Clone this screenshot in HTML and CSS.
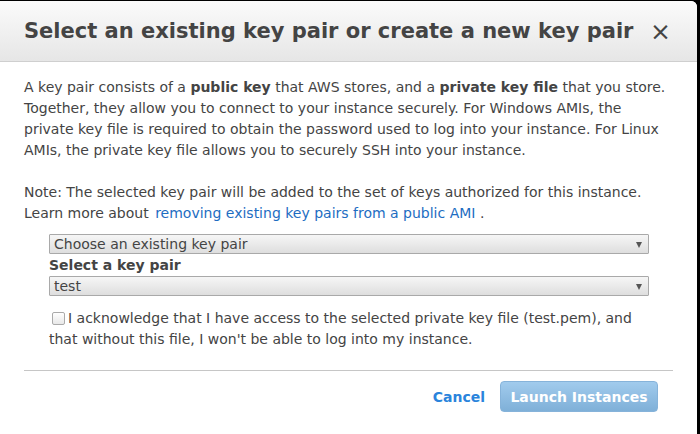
FILE: index.html
```html
<!DOCTYPE html>
<html>
<head>
<meta charset="utf-8">
<link rel="stylesheet" href="styles.css">
</head>
<body>
<div class="dialog">
  <div class="header">
    <h1 class="title">Select an existing key pair or create a new key pair</h1>
    <span class="close">&#xD7;</span>
  </div>
  <div class="body">
    <p class="para">A key pair consists of a <b>public key</b> that AWS stores, and a <b>private key file</b> that you store. Together, they allow you to connect to your instance securely. For Windows AMIs, the private key file is required to obtain the password used to log into your instance. For Linux AMIs, the private key file allows you to securely SSH into your instance.</p>
    <p class="para note">Note: The selected key pair will be added to the set of keys authorized for this instance. Learn more about <a class="link" href="#">removing existing key pairs from a public AMI</a> .</p>
    <div class="fields">
      <div class="select"><span>Choose an existing key pair</span><span class="arrow"></span></div>
      <div class="label">Select a key pair</div>
      <div class="select"><span>test</span><span class="arrow"></span></div>
      <p class="ack"><span class="check"></span>I acknowledge that I have access to the selected private key file (test.pem), and that without this file, I won't be able to log into my instance.</p>
    </div>
  </div>
  <div class="footer">
    <a class="cancel" href="#">Cancel</a>
    <button class="launch">Launch Instances</button>
  </div>
</div>
</body>
</html>
```
FILE: styles.css
```css
html, body {
  margin: 0;
  padding: 0;
  background: #000;
  height: 434px;
  overflow: hidden;
}
.dialog {
  margin-top: 1px;
  width: 697px;
  height: 433px;
  background: #fff;
  border-top-right-radius: 6px;
  font-family: "DejaVu Sans", sans-serif;
  color: #444;
}
.header {
  height: 60px;
  border-bottom: 1px solid #cfcfcf;
  border-top-right-radius: 6px;
  background: linear-gradient(#fbfbfb, #e6e6e6);
  display: flex;
  align-items: center;
  justify-content: space-between;
  padding: 0 26px 0 24px;
}
.title {
  margin: 0;
  font-size: 21px;
  font-weight: bold;
  color: #444;
}
.close {
  font-size: 25px;
  line-height: 25px;
  color: #444;
  margin-top: 1px;
}
.body {
  padding: 15px 24px 0 24px;
  font-size: 14px;
  line-height: 21px;
}
.para {
  margin: 0 0 21px 0;
}
.para.note {
  margin-bottom: 10px;
}
.link {
  color: #1d6dc2;
  text-decoration: none;
  margin-left: 2px;
}
.fields {
  margin: 0 0 0 25px;
  width: 600px;
}
.select {
  height: 18px;
  border: 1px solid #a9a9a9;
  border-radius: 1px;
  background: linear-gradient(#f6f6f6, #dedede);
  display: flex;
  align-items: center;
  justify-content: space-between;
  padding: 0 6px 0 4px;
  font-size: 14px;
  line-height: 18px;
  color: #444;
}
.arrow {
  width: 0;
  height: 0;
  border-left: 3px solid transparent;
  border-right: 3px solid transparent;
  border-top: 6px solid #555;
  margin-top: 1px;
}
.label {
  font-weight: bold;
  line-height: 22px;
}
.ack {
  margin: 12px 0 0 0;
  text-indent: 19px;
  position: relative;
}
.check {
  position: absolute;
  left: 3px;
  top: 4px;
  width: 11px;
  height: 11px;
  border: 1px solid #aaa;
  border-radius: 2px;
  background: linear-gradient(#fff, #e8e8e8);
}
.footer {
  margin: 20px 24px 0 24px;
  border-top: 1px solid #c6c6c6;
  display: flex;
  justify-content: flex-end;
  align-items: center;
  padding: 10px 15px 0 0;
}
.cancel {
  color: #2a84dc;
  font-weight: bold;
  font-size: 14px;
  text-decoration: none;
  margin-right: 15px;
}
.launch {
  width: 158px;
  height: 31px;
  border: 1px solid #86b3da;
  border-radius: 4px;
  background: linear-gradient(#a1cbed, #7fb0d8);
  color: #fff;
  font-family: "DejaVu Sans", sans-serif;
  font-weight: bold;
  font-size: 14px;
  padding: 0;
}
```
